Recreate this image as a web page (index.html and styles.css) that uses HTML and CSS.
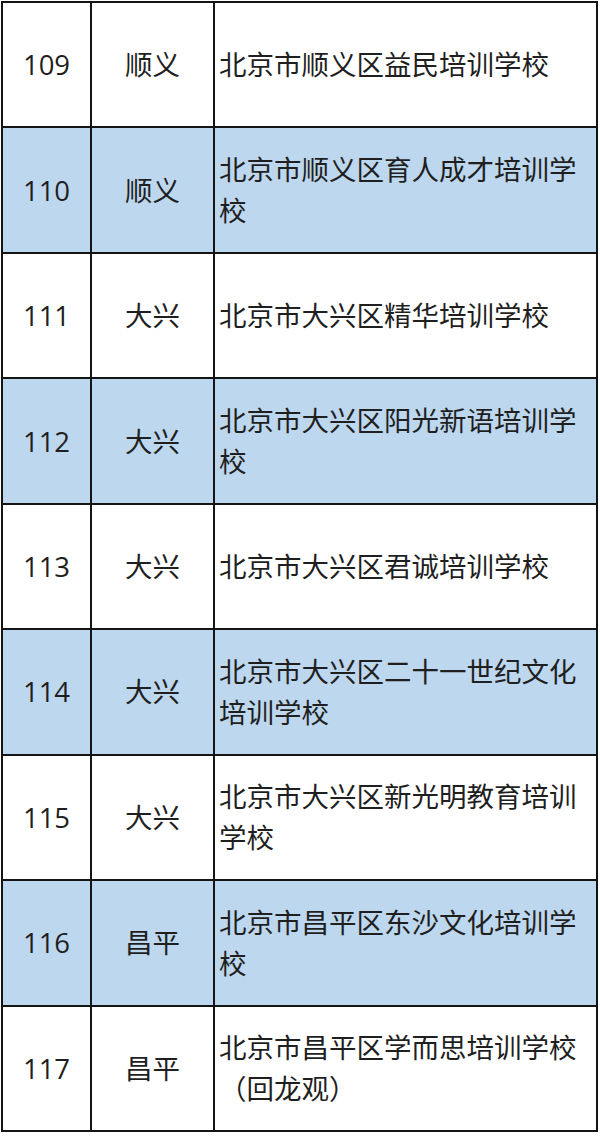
FILE: index.html
```html
<!DOCTYPE html>
<html lang="zh-CN">
<head>
<meta charset="utf-8">
<title>培训学校名单</title>
<link rel="stylesheet" href="styles.css">
</head>
<body>
<div class="sheet">
  <div class="row"><div class="cell num">109</div><div class="cell area">顺义</div><div class="cell name">北京市顺义区益民培训学校</div></div>
  <div class="row blue"><div class="cell num">110</div><div class="cell area">顺义</div><div class="cell name">北京市顺义区育人成才培训学校</div></div>
  <div class="row"><div class="cell num">111</div><div class="cell area">大兴</div><div class="cell name">北京市大兴区精华培训学校</div></div>
  <div class="row blue"><div class="cell num">112</div><div class="cell area">大兴</div><div class="cell name">北京市大兴区阳光新语培训学校</div></div>
  <div class="row"><div class="cell num">113</div><div class="cell area">大兴</div><div class="cell name">北京市大兴区君诚培训学校</div></div>
  <div class="row blue"><div class="cell num">114</div><div class="cell area">大兴</div><div class="cell name">北京市大兴区二十一世纪文化培训学校</div></div>
  <div class="row"><div class="cell num">115</div><div class="cell area">大兴</div><div class="cell name">北京市大兴区新光明教育培训学校</div></div>
  <div class="row blue"><div class="cell num">116</div><div class="cell area">昌平</div><div class="cell name">北京市昌平区东沙文化培训学校</div></div>
  <div class="row"><div class="cell num">117</div><div class="cell area">昌平</div><div class="cell name">北京市昌平区学而思培训学校（回龙观）</div></div>
</div>
</body>
</html>
```
FILE: styles.css
```css
html, body {
  margin: 0;
  padding: 0;
  background: #ffffff;
}

body {
  font-family: "Open Sans", "Noto Sans CJK SC", sans-serif;
  color: #1f1f1f;
}

.sheet {
  margin: 1px 0 0 1px;
  width: 597px;
  box-sizing: border-box;
  padding: 2px;
  background: #141414;
  display: flex;
  flex-direction: column;
  gap: 2px;
}

.row {
  display: grid;
  grid-template-columns: 87px 121px 1fr;
  column-gap: 2px;
  height: 123.44px;
}

.cell {
  background: #ffffff;
  display: flex;
  align-items: center;
  font-size: 27.5px;
  line-height: 41px;
}

.row.blue .cell {
  background: #bdd7ee;
}

.num,
.area {
  justify-content: center;
}

.name {
  padding: 0 4px 0 4px;
}
```
